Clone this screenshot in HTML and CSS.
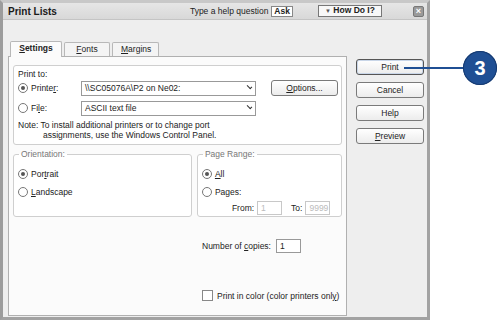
FILE: index.html
```html
<!DOCTYPE html>
<html lang="en">
<head>
    <meta charset="UTF-8">
    <title>Print Lists</title>
    <link rel="stylesheet" href="styles.css">
</head>
<body>
    <div class="dialog">
        <div class="titlebar">
            <span class="title">Print Lists</span>
            <span class="help-text">Type a help question</span>
            <span class="ask">Ask</span>
            <span class="howdo"><span class="tri">&#9660;</span> How Do I?</span>
            <span class="close">&#215;</span>
        </div>

        <div class="content">
            <div class="tabs-area">
                <div class="tabstrip">
                    <div class="tab active"><u>S</u>ettings</div>
                    <div class="tab"><u>F</u>onts</div>
                    <div class="tab"><u>M</u>argins</div>
                </div>
                <div class="panel">
                    <div class="group printto">
                        <div class="label-line">Print to:</div>
                        <div class="row">
                            <span class="radio checked"></span>
                            <span class="row-label">Printe<u>r</u>:</span>
                            <span class="select">\\SC05076A\P2 on Ne02:<span class="arrow"></span></span>
                            <span class="btn options"><u>O</u>ptions...</span>
                        </div>
                        <div class="row">
                            <span class="radio"></span>
                            <span class="row-label">Fi<u>l</u>e:</span>
                            <span class="select">ASCII text file<span class="arrow"></span></span>
                        </div>
                        <div class="note">Note: To install additional printers or to change port<br><span class="indent">assignments, use the Windows Control Panel.</span></div>
                    </div>

                    <div class="group-row">
                        <fieldset class="frame orientation">
                            <legend>Orientation:</legend>
                            <div class="opt"><span class="radio checked"></span>Por<u>t</u>rait</div>
                            <div class="opt"><span class="radio"></span><u>L</u>andscape</div>
                        </fieldset>
                        <fieldset class="frame range">
                            <legend>Page Range:</legend>
                            <div class="opt"><span class="radio checked"></span><u>A</u>ll</div>
                            <div class="opt"><span class="radio"></span>Pa<u>g</u>es:</div>
                            <div class="fromto">
                                <span>From:</span><span class="field disabled">1</span>
                                <span class="to-label">To:</span><span class="field disabled">9999</span>
                            </div>
                        </fieldset>
                    </div>

                    <div class="copies">
                        <span>Number of <u>c</u>opies:</span><span class="field">1</span>
                    </div>

                    <div class="color">
                        <span class="check"></span>Print in color (color printers onl<u>y</u>)
                    </div>
                </div>
            </div>

            <div class="buttons">
                <span class="btn default">Print</span>
                <span class="btn">Cancel</span>
                <span class="btn">Help</span>
                <span class="btn"><u>P</u>review</span>
            </div>
        </div>
    </div>

    <div class="callout-line"></div>
    <div class="callout">3</div>
</body>
</html>
```

FILE: styles.css
```css
body {
    margin: 0;
    background-color: #ffffff;
    font-family: "Liberation Sans", Arial, sans-serif;
    font-size: 8.5px;
    color: #222;
    width: 500px;
    height: 322px;
    overflow: hidden;
    position: relative;
}

u {
    text-decoration: underline;
}

.dialog {
    width: 424px;
    height: 314px;
    border: 3px solid #a2a2a2;
    border-top-color: #c8c8c8;
    border-left-color: #9c9c9c;
    background-color: #eeeeee;
    display: flex;
    flex-direction: column;
}

.titlebar {
    height: 16px;
    display: flex;
    align-items: center;
    padding: 0 3px 0 5px;
    background: linear-gradient(#e6e6e6, #d8d8d8);
    border-bottom: 1px solid #c4c4c4;
}

.title {
    font-size: 10px;
    font-weight: bold;
    color: #1a1a1a;
}

.help-text {
    margin-left: 133px;
}

.ask {
    margin-left: 3px;
    padding: 0 2px;
    font-weight: bold;
    background-color: #fff;
    border: 1px solid #888;
    line-height: 9px;
}

.howdo {
    margin-left: 25px;
    width: 62px;
    font-weight: bold;
    background-color: #f8f8f8;
    border: 1px solid #777;
    line-height: 9px;
    text-align: center;
}

.tri {
    font-size: 6px;
    color: #555;
}

.close {
    margin-left: auto;
    width: 9px;
    height: 9px;
    line-height: 9px;
    text-align: center;
    font-size: 9px;
    font-weight: bold;
    color: #fff;
    background-color: #9a9a9a;
    border: 1px solid #777;
    border-radius: 2px;
}

.content {
    display: flex;
    padding: 20px 0 0 5px;
}

.tabs-area {
    width: 339px;
    display: flex;
    flex-direction: column;
}

.tabstrip {
    display: flex;
    align-items: flex-end;
    padding-left: 2px;
    height: 16px;
    gap: 2px;
}

.tab {
    height: 13px;
    line-height: 13px;
    padding: 0 8px;
    border: 1px solid #b8b8b8;
    border-bottom: none;
    border-radius: 2px 2px 0 0;
    background-color: #f4f4f4;
    text-align: center;
}

.tab:nth-child(2) {
    width: 28px;
}

.tab:nth-child(3) {
    width: 29px;
}

.tab.active {
    height: 15px;
    font-weight: bold;
    background-color: #fbfbfb;
    margin-bottom: -1px;
    position: relative;
    width: 34px;
}

.panel {
    height: 250px;
    border: 1px solid #b0b0b0;
    background-color: #fbfbfb;
    padding: 8px 4px 0 4px;
    display: flex;
    flex-direction: column;
}

.group {
    border: 1px solid #cfcfcf;
    border-radius: 3px;
    background-color: #fff;
}

.printto {
    height: 75px;
    padding: 3px 0 0 4px;
}

.label-line {
    height: 9px;
}

.row {
    display: flex;
    align-items: center;
    height: 20px;
}

.radio {
    width: 8px;
    height: 8px;
    border: 1px solid #777;
    border-radius: 50%;
    background-color: #fff;
    display: inline-flex;
    align-items: center;
    justify-content: center;
    margin-right: 3px;
    flex: none;
}

.radio.checked::after {
    content: "";
    width: 4px;
    height: 4px;
    border-radius: 50%;
    background-color: #555;
}

.row-label {
    width: 50px;
}

.select {
    width: 170px;
    height: 13px;
    line-height: 13px;
    border: 1px solid #999;
    background-color: #fff;
    padding-left: 3px;
    position: relative;
}

.arrow {
    position: absolute;
    right: 3px;
    top: 3px;
    width: 4px;
    height: 2px;
    border-right: 1.5px solid #333;
    border-bottom: 1.5px solid #333;
    transform: rotate(45deg);
}

.btn {
    display: block;
    height: 14px;
    line-height: 14px;
    text-align: center;
    border: 1px solid #7a7a7a;
    border-radius: 3px;
    background: linear-gradient(#ffffff, #ececec);
}

.options {
    width: 65px;
    margin-left: 15px;
}

.note {
    margin-top: 2px;
    line-height: 10px;
}

.indent {
    padding-left: 25px;
}

.group-row {
    display: flex;
    gap: 5px;
    margin-top: 4px;
}

.frame {
    margin: 0;
    border: 1px solid #cfcfcf;
    border-radius: 3px;
    background-color: #fff;
    height: 60px;
    padding: 6px 4px 0 4px;
}

.frame legend {
    color: #777;
    padding: 0 2px;
    margin-left: 1px;
}

.orientation {
    width: 170px;
}

.range {
    width: 136px;
}

.opt {
    display: flex;
    align-items: center;
    height: 18px;
}

.fromto {
    display: flex;
    align-items: center;
    gap: 3px;
    padding-left: 30px;
}

.to-label {
    margin-left: 6px;
}

.field {
    display: inline-block;
    height: 12px;
    line-height: 12px;
    border: 1px solid #999;
    background-color: #fff;
    padding: 0 3px;
    width: 17px;
}

.field.disabled {
    border-color: #c8c8c8;
    color: #bbb;
}

.copies {
    display: flex;
    align-items: center;
    gap: 5px;
    margin: 22px 0 0 189px;
}

.color {
    display: flex;
    align-items: center;
    margin: 37px 0 0 189px;
}

.check {
    width: 9px;
    height: 9px;
    border: 1px solid #888;
    background-color: #fff;
    margin-right: 4px;
}

.buttons {
    display: flex;
    flex-direction: column;
    gap: 7px;
    width: 68px;
    margin: 19px 0 0 9px;
}

.btn.default {
    border-color: #555;
    box-shadow: inset 0 0 0 1px #c9d6e8;
}

.callout-line {
    position: absolute;
    left: 404px;
    top: 67px;
    width: 62px;
    height: 2px;
    background-color: #1f4f94;
}

.callout {
    position: absolute;
    left: 463px;
    top: 51px;
    width: 34px;
    height: 34px;
    border-radius: 50%;
    background-color: #1f4f94;
    color: #fff;
    font-size: 20px;
    font-weight: bold;
    line-height: 34px;
    text-align: center;
    box-shadow: inset 0 0 0 1px #163a70;
}
```
